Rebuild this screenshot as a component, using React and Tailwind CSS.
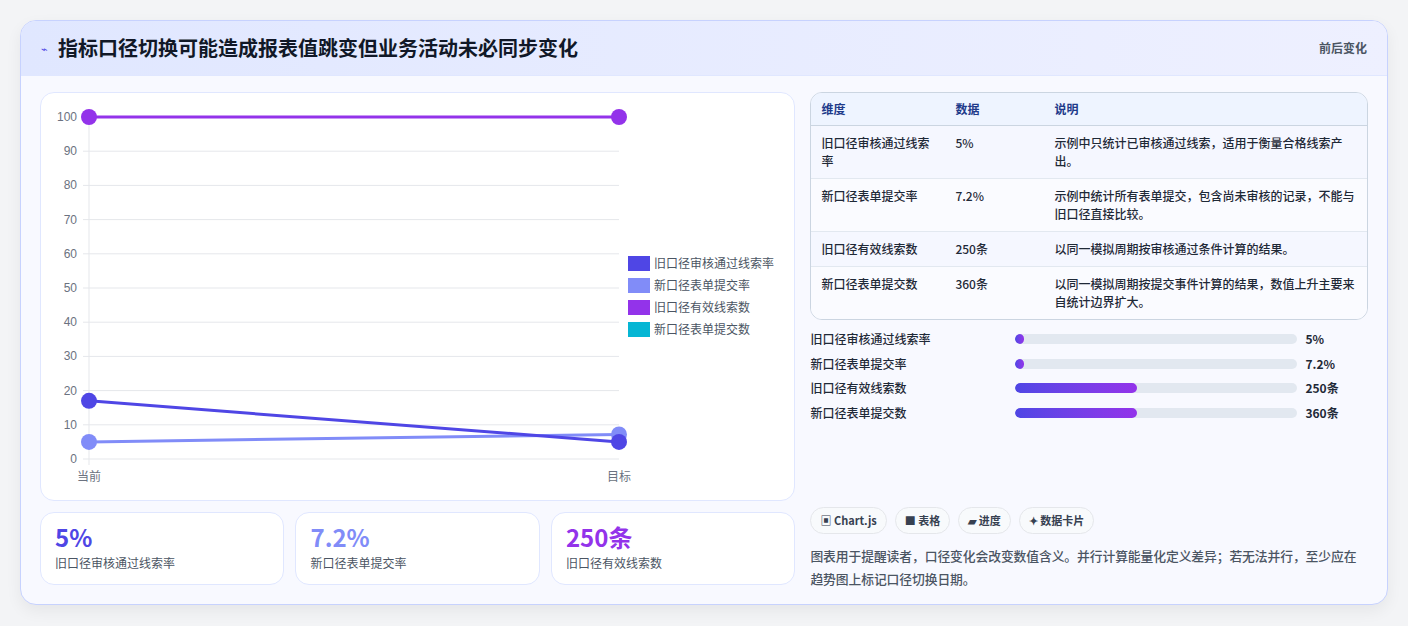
export default function App() {
  const F = { fontFamily: '"Noto Sans CJK SC", "Noto Sans", sans-serif' };
  const X0 = 48, X1 = 578, Y = (v) => 366 - v * 3.42;
  const ticks = [0,10,20,30,40,50,60,70,80,90,100];
  const rows = [
    ["旧口径审核通过线索率", "5%", "示例中只统计已审核通过线索，适用于衡量合格线索产出。", "bg-[#f5f7ff]"],
    ["新口径表单提交率", "7.2%", "示例中统计所有表单提交，包含尚未审核的记录，不能与旧口径直接比较。", "bg-[#fafbff]"],
    ["旧口径有效线索数", "250条", "以同一模拟周期按审核通过条件计算的结果。", "bg-[#f5f7ff]"],
    ["新口径表单提交数", "360条", "以同一模拟周期按提交事件计算的结果，数值上升主要来自统计边界扩大。", "bg-[#fafbff]"],
  ];
  const bars = [["旧口径审核通过线索率","5%",3],["新口径表单提交率","7.2%",3],["旧口径有效线索数","250条",43],["新口径表单提交数","360条",43]];
  const legend = [["旧口径审核通过线索率","#4f46e5"],["新口径表单提交率","#818cf8"],["旧口径有效线索数","#9333ea"],["新口径表单提交数","#06b6d4"]];
  return (
    <div style={F} className="w-[1408px] h-[626px] bg-[#f3f4f6] pt-[20px] pl-[20px] pr-[20px]">
      <div className="w-[1368px] h-[585px] rounded-[16px] border border-[#c7d2fe] bg-[#f8f9ff] overflow-hidden shadow-[0_6px_16px_rgba(0,0,0,0.06)]">
        <div className="h-[55px] flex items-center justify-between px-[20px] bg-gradient-to-r from-[#e0e7ff] to-[#eef0ff] border-b border-[#e0e7ff]">
          <div className="flex items-center gap-[10px]">
            <span className="text-[11px] text-[#4f46e5]">⌁</span>
            <span className="text-[20px] font-bold text-[#111827]">指标口径切换可能造成报表值跳变但业务活动未必同步变化</span>
          </div>
          <span className="text-[12px] font-semibold text-[#4b5563]">前后变化</span>
        </div>
        <div className="flex gap-[15px] px-[19px] pt-[16px]">
          <div className="w-[756px] flex flex-col gap-[11px]">
            <div className="h-[409px] bg-white rounded-[14px] border border-[#e0e7ff] relative">
              <svg width="754" height="407" className="absolute left-0 top-0">
                {ticks.map(t => (
                  <g key={t}>
                    <line x1={X0 - 6} x2={X1} y1={Y(t)} y2={Y(t)} stroke="#e5e7eb" />
                    <text x={X0 - 12} y={Y(t) + 4} textAnchor="end" fontSize="12" fill="#6b7280" fontFamily="Liberation Sans, sans-serif">{t}</text>
                  </g>
                ))}
                <line x1={X0} x2={X0} y1={Y(100)} y2={Y(0) + 6} stroke="#e5e7eb" />
                <text x={X0} y={388} textAnchor="middle" fontSize="12" fill="#6b7280">当前</text>
                <text x={X1} y={388} textAnchor="middle" fontSize="12" fill="#6b7280">目标</text>
                <line x1={X0} x2={X1} y1={Y(5)} y2={Y(7.2)} stroke="#818cf8" strokeWidth="3" />
                <line x1={X0} x2={X1} y1={Y(17)} y2={Y(5)} stroke="#4f46e5" strokeWidth="3" />
                <line x1={X0} x2={X1} y1={Y(100)} y2={Y(100)} stroke="#9333ea" strokeWidth="3" />
                <circle cx={X0} cy={Y(5)} r="8" fill="#818cf8" />
                <circle cx={X1} cy={Y(7.2)} r="8" fill="#818cf8" />
                <circle cx={X0} cy={Y(17)} r="8" fill="#4f46e5" />
                <circle cx={X1} cy={Y(5)} r="8" fill="#4f46e5" />
                <circle cx={X0} cy={Y(100)} r="8" fill="#9333ea" />
                <circle cx={X1} cy={Y(100)} r="8" fill="#9333ea" />
                {legend.map(([l, c], i) => (
                  <g key={l}>
                    <rect x={587} y={163 + i * 22} width="22" height="15" fill={c} />
                    <text x={613} y={175 + i * 22} fontSize="12" fill="#4b5563">{l}</text>
                  </g>
                ))}
              </svg>
            </div>
            <div className="grid grid-cols-3 gap-[11px]">
              {[["5%","旧口径审核通过线索率","text-[#4f46e5]"],["7.2%","新口径表单提交率","text-[#818cf8]"],["250条","旧口径有效线索数","text-[#9333ea]"]].map(([v,l,c]) => (
                <div key={l} className="h-[73px] bg-white rounded-[14px] border border-[#e0e7ff] px-[14px] pt-[9px]">
                  <div className={`text-[24px] leading-[30px] font-bold ${c}`}>{v}</div>
                  <div className="text-[12px] text-[#4b5563] mt-[2px]">{l}</div>
                </div>
              ))}
            </div>
          </div>
          <div className="w-[558px] flex flex-col">
            <div className="rounded-[12px] border border-[#cbd5e1] overflow-hidden text-[12px] text-[#1f2937]">
              <div className="flex h-[33px] items-center bg-[#eef4ff] border-b border-[#cbd5e1] font-semibold text-[#1e3a8a]">
                <div className="w-[144px] pl-[10px]">维度</div>
                <div className="w-[99px]">数据</div>
                <div className="flex-1">说明</div>
              </div>
              {rows.map(([a,b,c,bg], i) => (
                <div key={a} className={`flex py-[8px] leading-[18px] ${bg} ${i < 3 ? "border-b border-[#e2e8f0]" : ""}`}>
                  <div className="w-[144px] pl-[10px] pr-[16px] font-medium">{a}</div>
                  <div className="w-[99px] font-medium">{b}</div>
                  <div className="flex-1 pr-[10px] font-medium">{c}</div>
                </div>
              ))}
            </div>
            <div className="mt-[10px] flex flex-col gap-[6px]">
              {bars.map(([l,v,p]) => (
                <div key={l} className="flex items-center h-[18.5px] text-[12px] font-medium text-[#1f2937]">
                  <div className="w-[205px]">{l}</div>
                  <div className="w-[282px] h-[10px] bg-[#e2e8f0] rounded-full overflow-hidden">
                    <div className="h-full rounded-full bg-gradient-to-r from-[#4f46e5] to-[#9333ea]" style={{ width: p + "%" }} />
                  </div>
                  <div className="pl-[8px] font-bold">{v}</div>
                </div>
              ))}
            </div>
            <div className="mt-[85px] flex gap-[8px] text-[11px] font-semibold text-[#374151]">
              {["▣ Chart.js","■ 表格","▰ 进度","✦ 数据卡片"].map(t => (
                <span key={t} className="h-[27px] px-[9px] flex items-center rounded-full border border-[#e5e7eb] bg-[#f8fafc]">{t}</span>
              ))}
            </div>
            <p className="mt-[10px] text-[12.8px] leading-[23px] text-[#4b5563] font-medium tracking-[-0.1px]">图表用于提醒读者，口径变化会改变数值含义。并行计算能量化定义差异；若无法并行，至少应在趋势图上标记口径切换日期。</p>
          </div>
        </div>
      </div>
    </div>
  );
}
